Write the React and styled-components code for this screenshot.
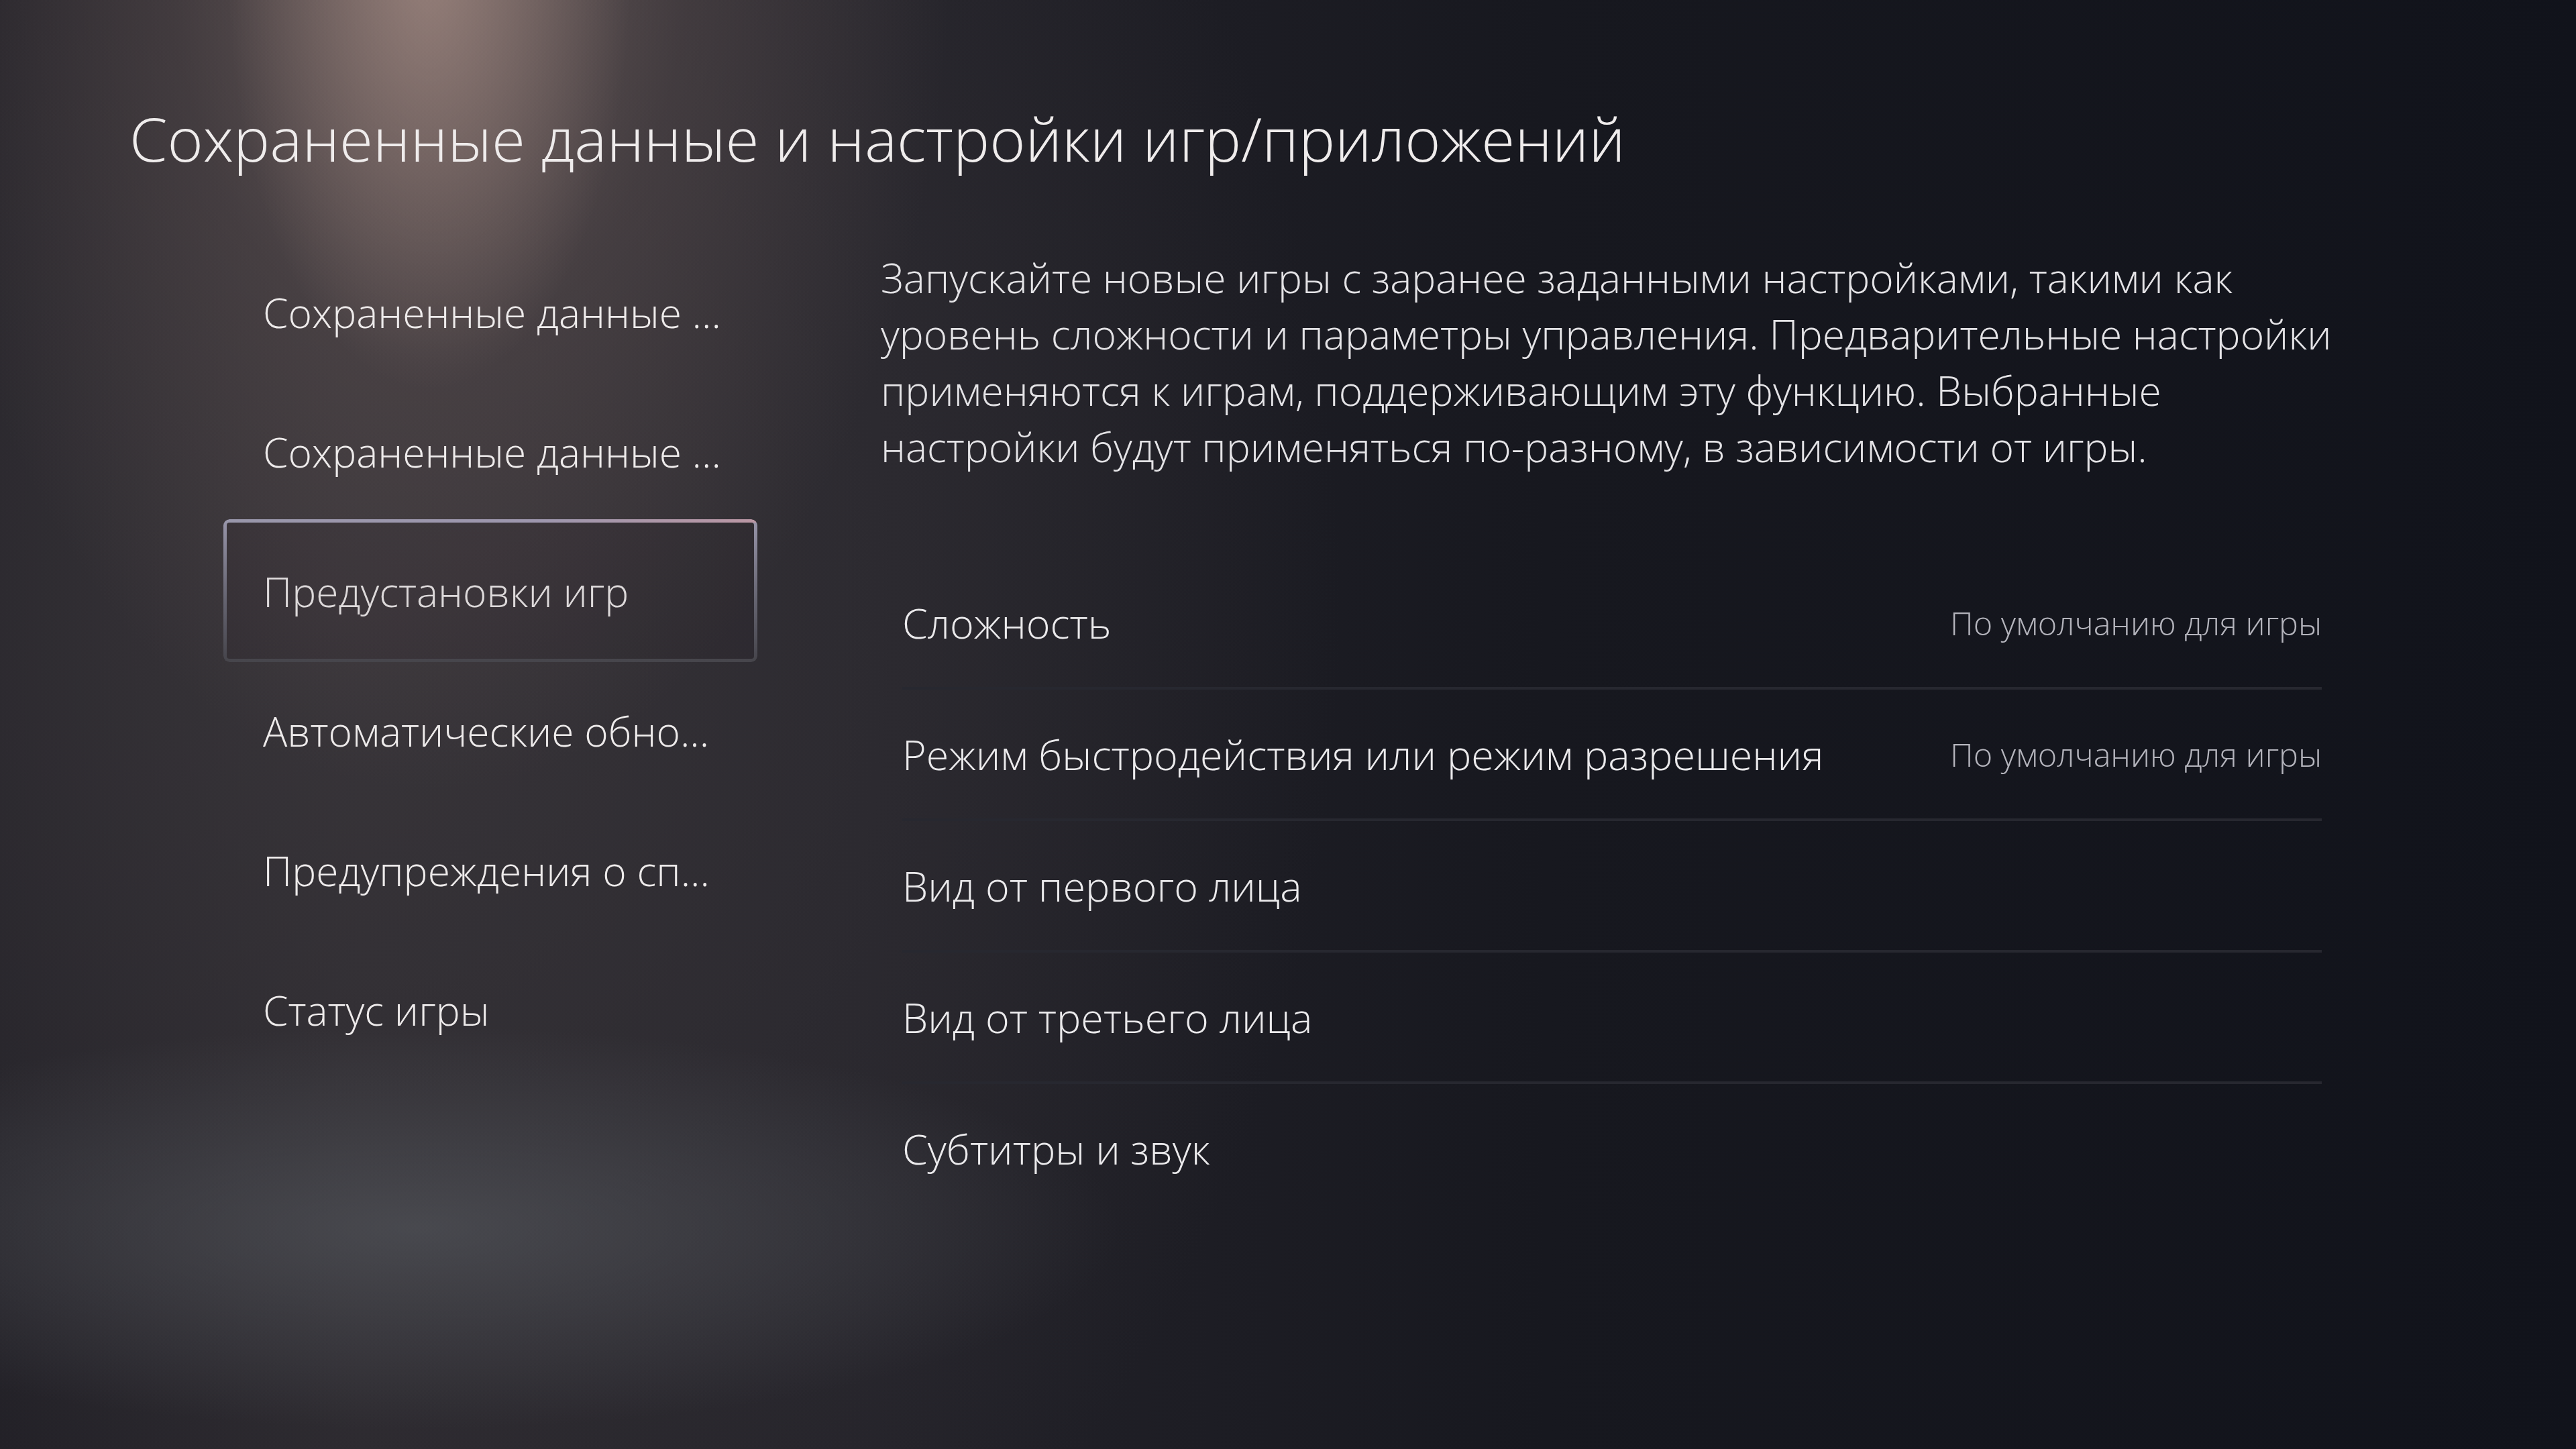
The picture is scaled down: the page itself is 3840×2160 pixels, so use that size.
import React from "react";
import styled, { createGlobalStyle } from "styled-components";

const GlobalStyle = createGlobalStyle`
  html, body {
    margin: 0;
    padding: 0;
    background: #12131b;
  }
  body {
    font-family: "Open Sans", "Noto Sans", "DejaVu Sans", sans-serif;
    -webkit-font-smoothing: antialiased;
  }
`;

const Screen = styled.div`
  width: 3840px;
  height: 2160px;
  box-sizing: border-box;
  padding: 161px 0 0 193px;
  overflow: hidden;
  background:
    radial-gradient(ellipse 300px 620px at 640px -40px, rgba(190, 160, 150, 0.5) 0%, rgba(160, 135, 128, 0) 100%),
    radial-gradient(ellipse 780px 1300px at 640px -120px, rgba(150, 128, 122, 0.6) 0%, rgba(120, 102, 100, 0.28) 50%, rgba(90, 78, 78, 0) 100%),
    radial-gradient(ellipse 1050px 300px at 620px 1830px, rgba(96, 100, 106, 0.5) 0%, rgba(70, 72, 78, 0) 100%),
    radial-gradient(ellipse 1500px 1900px at 500px 900px, rgba(62, 58, 62, 0.75) 0%, rgba(50, 46, 52, 0) 100%),
    linear-gradient(90deg, #1c1b22 0%, #28262c 14%, #232229 34%, #17181f 60%, #11131b 100%);
`;

const Title = styled.h1`
  margin: 0;
  font-size: 91px;
  line-height: 1;
  font-weight: 300;
  color: #efecec;
  letter-spacing: 0;
`;

const Body = styled.div`
  display: flex;
  gap: 184px;
  margin-top: 109px;
  margin-left: 140px;
`;

const Menu = styled.nav`
  width: 796px;
  display: flex;
  flex-direction: column;
`;

const MenuItem = styled.div`
  position: relative;
  height: 208px;
  box-sizing: border-box;
  padding-left: 59px;
  display: flex;
  align-items: center;
  font-size: 60.5px;
  font-weight: 300;
  color: #eeebeb;
  white-space: nowrap;

  ${(p) =>
    p.$active &&
    `
    &::before {
      content: "";
      position: absolute;
      inset: -3px 0 -2px 0;
      border-radius: 9px;
      padding: 5px;
      background:
        linear-gradient(90deg, #a4a3b8 0%, #aaa3bb 60%, #c9a3b0 100%) top / 100% 5px no-repeat,
        linear-gradient(180deg, #a3a1b6 0%, #6d6d7a 55%, #4a4a50 100%);
      -webkit-mask: linear-gradient(#000 0 0) content-box, linear-gradient(#000 0 0);
      -webkit-mask-composite: xor;
      mask-composite: exclude;
    }
    &::after {
      content: "";
      position: absolute;
      inset: -3px 0 -2px 0;
      border-radius: 9px;
      background: rgba(20, 18, 24, 0.08);
    }
  `}
`;

const Content = styled.section`
  display: flex;
  flex-direction: column;
  padding-top: 11px;
`;

const Description = styled.p`
  margin: 0;
  font-size: 60.5px;
  line-height: 84px;
  font-weight: 300;
  color: #e4e3e6;
  white-space: nowrap;
`;

const OptionList = styled.div`
  margin: 124px 0 0 32px;
  width: 2116px;
  display: flex;
  flex-direction: column;
`;

const Option = styled.div`
  height: 196px;
  box-sizing: border-box;
  display: flex;
  align-items: center;
  justify-content: space-between;
  border-bottom: ${(p) => (p.$last ? "none" : "4px solid #272830")};
  padding-bottom: ${(p) => (p.$last ? "4px" : "0")};
`;

const OptionLabel = styled.span`
  font-size: 61px;
  font-weight: 300;
  color: #ebeaec;
`;

const OptionValue = styled.span`
  font-size: 48.5px;
  font-weight: 300;
  color: #b4b4bc;
`;

const menu = [
  "Сохраненные данные ...",
  "Сохраненные данные ...",
  "Предустановки игр",
  "Автоматические обно...",
  "Предупреждения о сп...",
  "Статус игры",
];

const description = [
  "Запускайте новые игры с заранее заданными настройками, такими как",
  "уровень сложности и параметры управления. Предварительные настройки",
  "применяются к играм, поддерживающим эту функцию. Выбранные",
  "настройки будут применяться по-разному, в зависимости от игры.",
];

const options = [
  { label: "Сложность", value: "По умолчанию для игры" },
  { label: "Режим быстродействия или режим разрешения", value: "По умолчанию для игры" },
  { label: "Вид от первого лица" },
  { label: "Вид от третьего лица" },
  { label: "Субтитры и звук" },
];

export default function App() {
  return (
    <>
      <GlobalStyle />
      <Screen>
        <Title>Сохраненные данные и настройки игр/приложений</Title>
        <Body>
          <Menu>
            {menu.map((item, i) => (
              <MenuItem key={i} $active={i === 2}>
                {item}
              </MenuItem>
            ))}
          </Menu>
          <Content>
            <Description>
              {description.map((line, i) => (
                <React.Fragment key={i}>
                  {line}
                  {i < description.length - 1 && <br />}
                </React.Fragment>
              ))}
            </Description>
            <OptionList>
              {options.map((o, i) => (
                <Option key={o.label} $last={i === options.length - 1}>
                  <OptionLabel>{o.label}</OptionLabel>
                  {o.value && <OptionValue>{o.value}</OptionValue>}
                </Option>
              ))}
            </OptionList>
          </Content>
        </Body>
      </Screen>
    </>
  );
}
